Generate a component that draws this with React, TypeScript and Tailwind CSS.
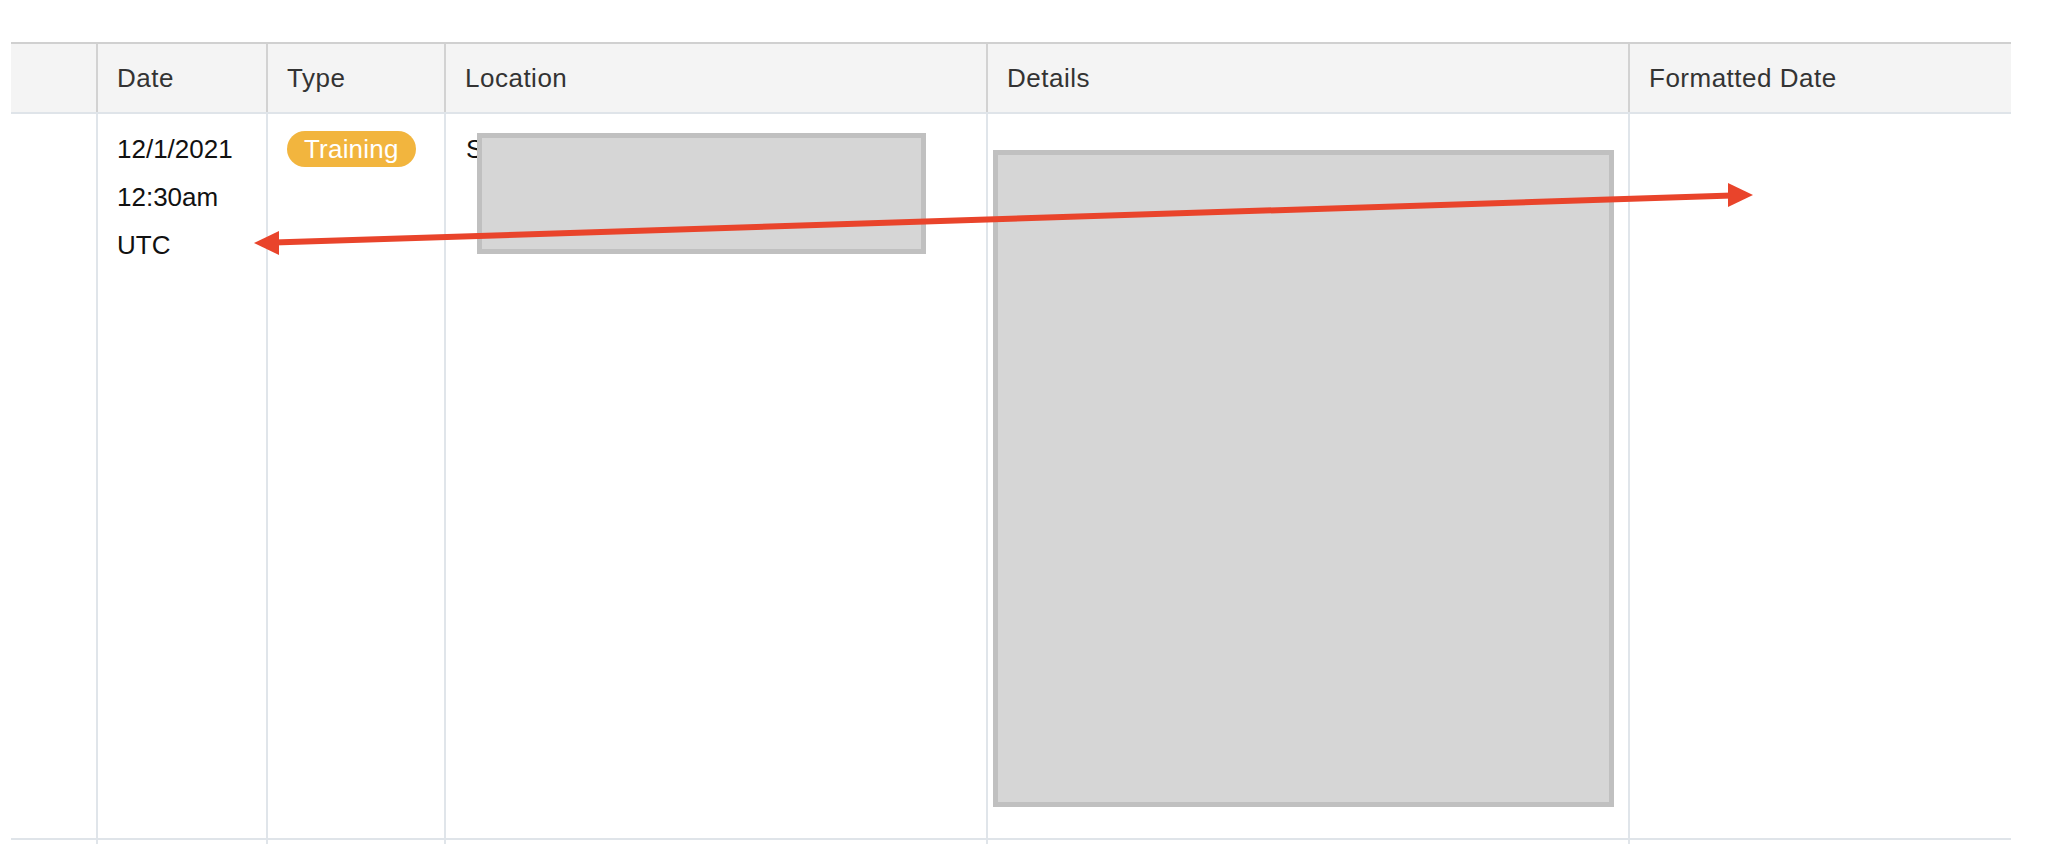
import React from "react";

const cols = "grid grid-cols-[85px_170px_178px_542px_642px_383px]";

const headers = ["", "Date", "Type", "Location", "Details", "Formatted Date"];

const Arrow = () => (
  <svg
    className="pointer-events-none absolute left-0 top-0"
    width="2064"
    height="844"
    viewBox="0 0 2064 844"
  >
    <line
      x1="274"
      y1="242.5"
      x2="1732"
      y2="195.5"
      stroke="#e9442b"
      strokeWidth="6"
    />
    <polygon points="254,243 279,231 279,255" fill="#e9442b" />
    <polygon points="1753,195 1728,183 1728,207" fill="#e9442b" />
  </svg>
);

export default function App() {
  return (
    <div className="relative min-h-screen overflow-hidden bg-white pl-[11px] pt-[42px] font-['Liberation_Sans',Arial,sans-serif]">
      <div className="w-[2000px]">
        {/* header */}
        <div
          className={`${cols} h-[72px] border-y-2 border-t-[#d0d0d0] border-b-[#dfe4e9] bg-[#f4f4f4] text-[26px] tracking-[0.5px] text-[#333]`}
        >
          {headers.map((h, i) => (
            <div
              key={i}
              className={`flex items-center pl-[19px] ${
                i > 0 ? "border-l-2 border-[#d2d2d2]" : ""
              }`}
            >
              {h}
            </div>
          ))}
        </div>

        {/* row */}
        <div
          className={`${cols} h-[726px] border-b-2 border-[#dfe4e9] text-[26px] text-[#111]`}
        >
          <div />
          <div className="border-l-2 border-[#e0e5ea] pl-[19px] pt-[11px] leading-[48px]">
            <div>12/1/2021</div>
            <div>12:30am</div>
            <div>UTC</div>
          </div>
          <div className="border-l-2 border-[#e0e5ea] pl-[19px] pt-[16px]">
            <span className="inline-flex h-[36px] items-center rounded-full bg-[#f2b53e] px-[17px] font-medium leading-[36px] tracking-[0.2px] text-white">
              Training
            </span>
          </div>
          <div className="relative border-l-2 border-[#e0e5ea] pl-[20px] pt-[11px] leading-[48px]">
            <div className="whitespace-nowrap">San Francisco, CA</div>
            <div className="absolute left-[31px] top-[19px] h-[121px] w-[449px] border-[5px] border-[#c0c0c0] bg-[#d6d6d6]" />
          </div>
          <div className="border-l-2 border-[#e0e5ea] pl-[5px] pt-[36px]">
            <div className="h-[657px] w-[621px] border-[5px] border-[#c0c0c0] bg-[#d6d6d6]" />
          </div>
          <div className="border-l-2 border-[#e0e5ea]" />
        </div>

        {/* next row, cut off */}
        <div className={`${cols} h-[40px]`}>
          <div />
          <div className="border-l-2 border-[#e0e5ea]" />
          <div className="border-l-2 border-[#e0e5ea]" />
          <div className="border-l-2 border-[#e0e5ea]" />
          <div className="border-l-2 border-[#e0e5ea]" />
          <div className="border-l-2 border-[#e0e5ea]" />
        </div>
      </div>
      <Arrow />
    </div>
  );
}
